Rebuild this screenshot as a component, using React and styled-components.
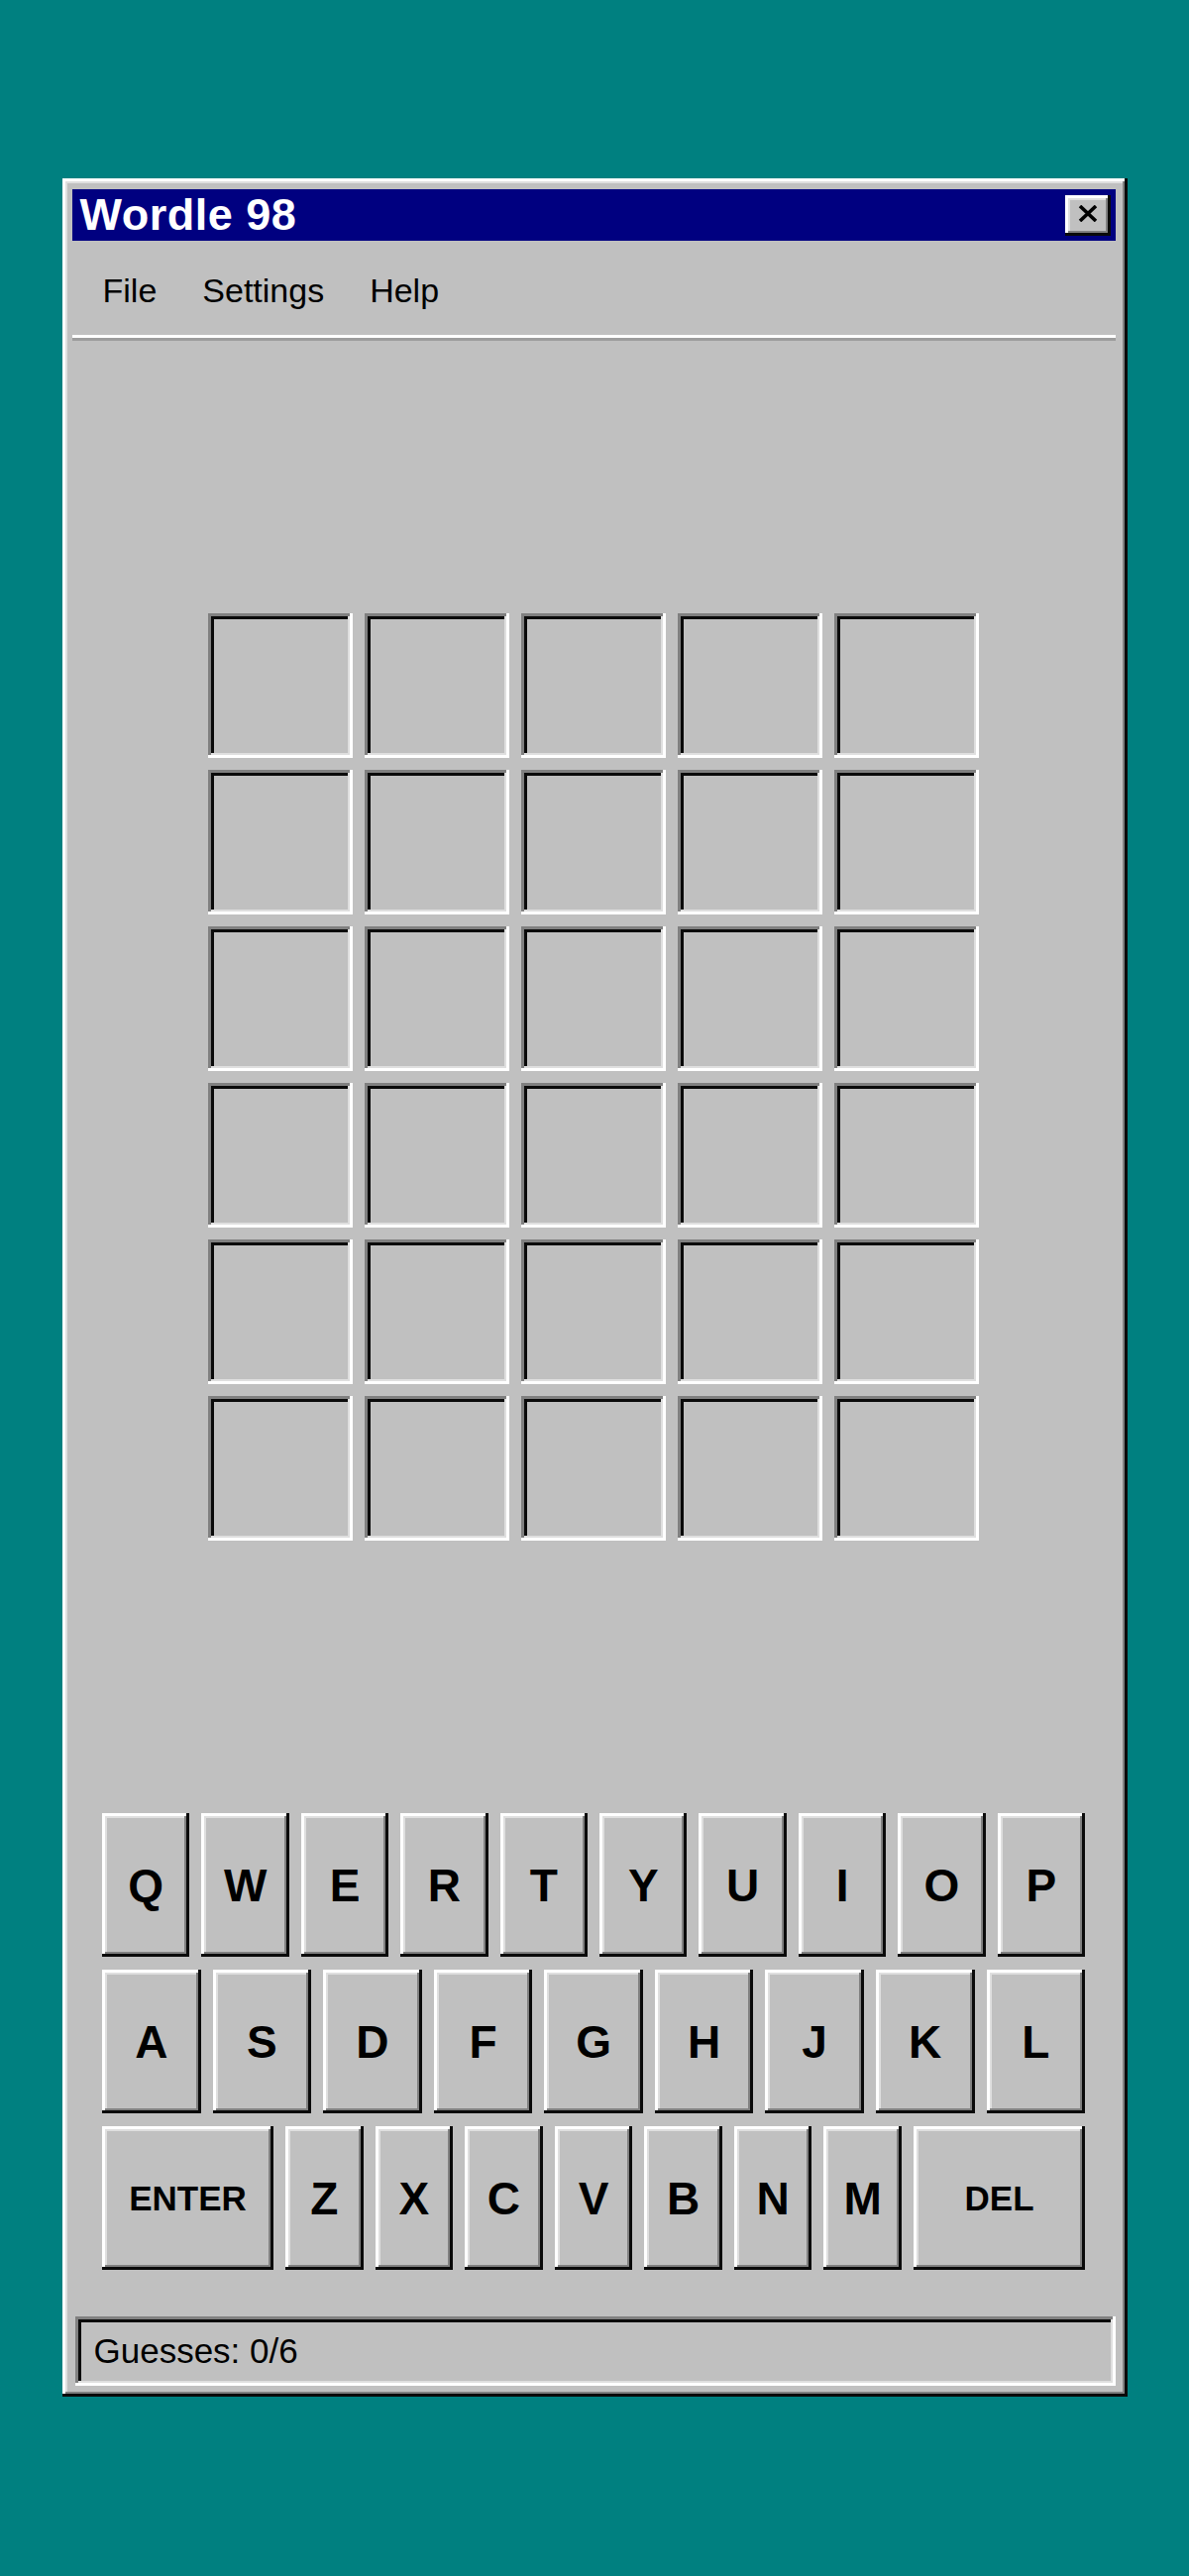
import React from 'react';
import styled, { createGlobalStyle } from 'styled-components';

const GlobalStyle = createGlobalStyle`
  html, body {
    margin: 0;
    padding: 0;
    background: #008080;
  }

  body {
    font-family: "Liberation Sans", Arial, sans-serif;
  }

  * {
    box-sizing: border-box;
  }
`;

const raisedBevel = `
  box-shadow: inset -3px -3px #0a0a0a, inset 3px 3px #ffffff,
    inset -5px -5px #808080, inset 5px 5px #dfdfdf;
`;

const sunkenBevel = `
  box-shadow: inset -3px -3px #ffffff, inset 3px 3px #808080,
    inset -5px -5px #dfdfdf, inset 6px 6px #0a0a0a;
`;

const Desktop = styled.div`
  min-height: 2600px;
  padding-top: 180px;
`;

const Window = styled.div`
  width: 1075px;
  height: 2239px;
  margin: 0 auto;
  padding: 11px 12px 11px 10px;
  display: flex;
  flex-direction: column;
  background: #c0c0c0;
  ${raisedBevel}
`;

const TitleBar = styled.div`
  height: 52px;
  flex-shrink: 0;
  display: flex;
  align-items: center;
  justify-content: space-between;
  padding: 0 5px 0 8px;
  background: #000080;
`;

const TitleText = styled.span`
  color: #ffffff;
  font-size: 45px;
  font-weight: bold;
  letter-spacing: 0.5px;
`;

const CloseButton = styled.button`
  width: 46px;
  height: 41px;
  padding: 0 0 3px 0;
  border: none;
  background: #c0c0c0;
  display: flex;
  align-items: center;
  justify-content: center;
  ${raisedBevel}
`;

const MenuBar = styled.div`
  height: 98px;
  flex-shrink: 0;
  display: flex;
  align-items: center;
  padding: 6px 0 0 8px;
  border-bottom: 3px solid #ffffff;
`;

const MenuItem = styled.span`
  padding: 0 23px;
  font-size: 34px;
  color: #000000;
`;

const Divider = styled.div`
  height: 3px;
  flex-shrink: 0;
  background: #9c9c9c;
`;

const GameArea = styled.div`
  flex: 1;
  display: flex;
  align-items: center;
  justify-content: center;
`;

const Board = styled.div`
  display: grid;
  grid-template-columns: repeat(5, 146px);
  grid-auto-rows: 146px;
  gap: 12px;
`;

const Cell = styled.div`
  background: #c0c0c0;
  ${sunkenBevel}
`;

const Keyboard = styled.div`
  width: 992px;
  margin: 0 auto;
  display: flex;
  flex-direction: column;
  gap: 13px;
  flex-shrink: 0;
`;

const KeyRow = styled.div`
  display: flex;
  gap: 12px;
`;

const Key = styled.button`
  flex: ${(p) => (p.$wide ? 2.2 : 1)};
  min-width: 0;
  height: 145px;
  padding: 0;
  border: none;
  background: #c0c0c0;
  color: #000000;
  font-family: "Liberation Sans", Arial, sans-serif;
  font-size: ${(p) => (p.$wide ? 35 : 46)}px;
  font-weight: bold;
  display: flex;
  align-items: center;
  justify-content: center;
  ${raisedBevel}
`;

const StatusBar = styled.div`
  height: 70px;
  margin: 47px 0 0 3px;
  flex-shrink: 0;
  display: flex;
  align-items: center;
  padding-left: 19px;
  font-size: 35px;
  color: #000000;
  background: #c0c0c0;
  ${sunkenBevel}
`;

const rows = [
  ['Q', 'W', 'E', 'R', 'T', 'Y', 'U', 'I', 'O', 'P'],
  ['A', 'S', 'D', 'F', 'G', 'H', 'J', 'K', 'L'],
  ['ENTER', 'Z', 'X', 'C', 'V', 'B', 'N', 'M', 'DEL'],
];

function CloseIcon() {
  return (
    <svg width="20" height="17" viewBox="0 0 20 17">
      <path d="M2 1 L18 16 M18 1 L2 16" stroke="#000" strokeWidth="3.6" fill="none" />
    </svg>
  );
}

export default function App() {
  const cells = Array.from({ length: 30 });

  return (
    <>
      <GlobalStyle />
      <Desktop>
        <Window>
          <TitleBar>
            <TitleText>Wordle 98</TitleText>
            <CloseButton aria-label="Close">
              <CloseIcon />
            </CloseButton>
          </TitleBar>
          <MenuBar>
            <MenuItem>File</MenuItem>
            <MenuItem>Settings</MenuItem>
            <MenuItem>Help</MenuItem>
          </MenuBar>
          <Divider />
          <GameArea>
            <Board>
              {cells.map((_, i) => (
                <Cell key={i} />
              ))}
            </Board>
          </GameArea>
          <Keyboard>
            {rows.map((row, r) => (
              <KeyRow key={r}>
                {row.map((k) => (
                  <Key key={k} $wide={k.length > 1}>
                    {k}
                  </Key>
                ))}
              </KeyRow>
            ))}
          </Keyboard>
          <StatusBar>Guesses: 0/6</StatusBar>
        </Window>
      </Desktop>
    </>
  );
}
